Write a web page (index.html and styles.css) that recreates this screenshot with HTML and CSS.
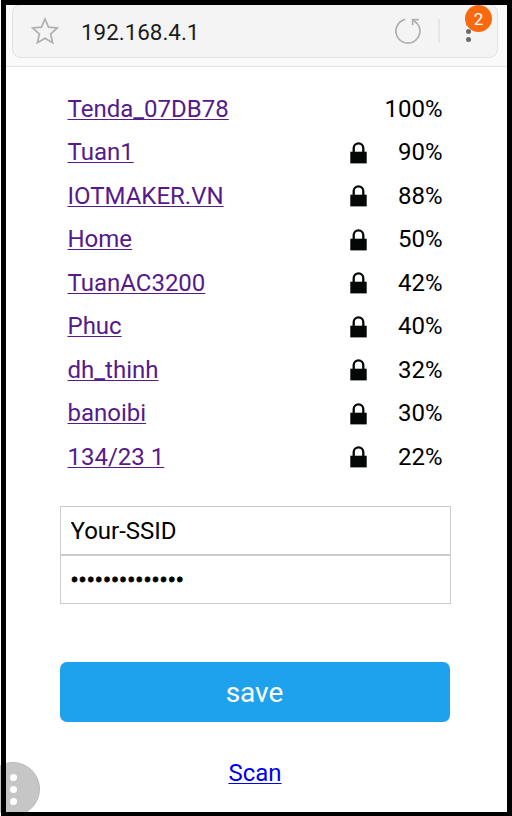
FILE: index.html
```html
<!DOCTYPE html>
<html lang="en">
<head>
<meta charset="utf-8">
<title>WiFi setup</title>
<link rel="stylesheet" href="styles.css">
</head>
<body>
<svg class="defs" width="0" height="0"><symbol id="lock" viewBox="0 0 17 22"><path d="M.3 9.7h16.4V21.4H.3z"/><path d="M3.7 10V6.2a4.8 4.8 0 0 1 9.6 0v4" fill="none" stroke="#030706" stroke-width="2.3"/></symbol></svg>
<header class="browser">
  <div class="address">
    <svg class="star" width="28" height="28" viewBox="0 0 28 28"><path d="M14 2l3.5 8.2 8.8.8-6.7 6 2 8.8-7.6-4.5-7.6 4.5 2-8.8-6.7-6 8.8-.8z"/></svg>
    <span class="url">192.168.4.1</span>
    <svg class="reload" width="30" height="30" viewBox="0 0 30 30"><path d="M12.2 3.4a12 12 0 1 0 12 4.1L20 4"/><path d="M25.8 3.7h-6.2v5.6"/></svg>
    <span class="divider"></span>
    <div class="more"><i></i><i></i><i></i><b class="badge">2</b></div>
  </div>
</header>
<main>
  <ul class="networks">
    <li><a href="#">Tenda_07DB78</a><span>100%</span></li>
    <li><a href="#">Tuan1</a><svg><use href="#lock"/></svg><span>90%</span></li>
    <li><a href="#">IOTMAKER.VN</a><svg><use href="#lock"/></svg><span>88%</span></li>
    <li><a href="#">Home</a><svg><use href="#lock"/></svg><span>50%</span></li>
    <li><a href="#">TuanAC3200</a><svg><use href="#lock"/></svg><span>42%</span></li>
    <li><a href="#">Phuc</a><svg><use href="#lock"/></svg><span>40%</span></li>
    <li><a href="#">dh_thinh</a><svg><use href="#lock"/></svg><span>32%</span></li>
    <li><a href="#">banoibi</a><svg><use href="#lock"/></svg><span>30%</span></li>
    <li><a href="#">134/23 1</a><svg><use href="#lock"/></svg><span>22%</span></li>
  </ul>
  <form>
    <input type="text" value="Your-SSID">
    <input type="password" value="12345678901234">
    <button type="button">save</button>
  </form>
  <a class="scan" href="#">Scan</a>
</main>
<div class="float"><i></i><i></i><i></i></div>
<div class="frame"></div>
</body>
</html>
```
FILE: styles.css
```css
* { box-sizing: border-box; }
body {
  margin: 0;
  height: 816px;
  position: relative;
  overflow: hidden;
  background: #fff;
  color: #000;
  font: 24px/28px Roboto, "Liberation Sans", sans-serif;
}
.defs { position: absolute; }
.browser {
  height: 67px;
  padding: 4px 14px 0 12px;
  background: #fafafa;
  border-bottom: 1px solid #e3e3e3;
}
.address {
  height: 54px;
  display: flex;
  align-items: center;
  padding-left: 18px;
  background: #f4f4f4;
  border: 1px solid #e2e2e2;
  border-radius: 9px;
}
.star path, .reload path { fill: none; stroke: #b0b0b0; stroke-width: 1.7; }
.url { flex: 1; margin-left: 22px; padding-top: 1px; font-size: 22.4px; color: #1c1c1c; }
.divider { width: 2px; height: 24px; margin: 0 26px 0 15px; background: #e6e6e6; }
.more {
  position: relative;
  width: 31px;
  padding-top: 1px;
  display: flex;
  flex-direction: column;
  gap: 3px;
}
.more i { width: 5px; height: 5px; border-radius: 50%; background: #6b6b6b; }
.badge {
  position: absolute;
  left: -1px;
  top: -15px;
  width: 27px;
  height: 27px;
  border-radius: 50%;
  background: #f9690e;
  color: #fff;
  font: 17px/28px Roboto, sans-serif;
  text-align: center;
}
main { width: 391px; margin-left: 59.5px; padding-top: 19.8px; }
.networks { list-style: none; margin: 0; padding: 0 8px; }
.networks li { height: 43.5px; display: flex; align-items: center; }
.networks a { flex: 1; color: #551a8b; }
a { text-decoration-thickness: 1px; text-underline-offset: 2px; text-decoration-skip-ink: none; }
.networks svg { width: 17px; height: 22px; margin: 1px 1px 0 0; fill: #030706; }
.networks span { width: 75px; text-align: right; }
form { display: flex; flex-direction: column; margin-top: 27.6px; }
input {
  height: 49px;
  padding: 2px 10px 0;
  border: 1px solid #ccc;
  font: 24px Roboto, sans-serif;
  color: #000;
}
input[type="password"] { -webkit-text-stroke: 0.8px #000; }
button {
  width: 390px;
  height: 60px;
  margin-top: 58.4px;
  border: 0;
  border-radius: 7px;
  background: #1fa2ed;
  color: #fff;
  font: 28px Roboto, sans-serif;
}
.scan { display: block; width: max-content; margin: 37px auto 0; color: #0000ee; }
.float {
  position: absolute;
  left: -14px;
  top: 762px;
  width: 54px;
  height: 54px;
  border-radius: 50%;
  border: 1px solid #bbb;
  background: #c6c6c6;
  display: flex;
  flex-direction: column;
  align-items: center;
  justify-content: center;
  gap: 5px;
}
.float i { width: 7px; height: 7px; border-radius: 50%; background: #fff; }
.frame {
  position: absolute;
  inset: 0 0 0 1px;
  border: solid #000;
  border-width: 5px 5px 4px;
}
```
